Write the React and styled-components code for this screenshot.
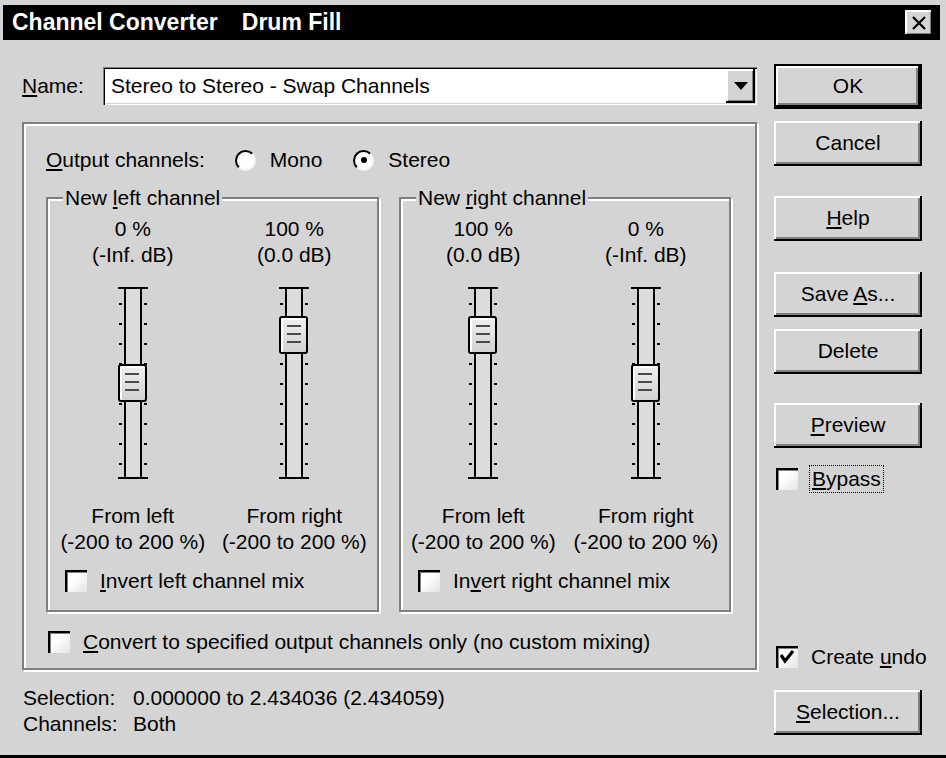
import React from 'react';
import styled, { createGlobalStyle, css } from 'styled-components';

const FACE = '#d4d4d4';
const SHADOW = '#808080';

const GlobalStyle = createGlobalStyle`
  html, body {
    margin: 0;
    padding: 0;
    background: ${FACE};
  }
`;

const Window = styled.div`
  box-sizing: border-box;
  width: 946px;
  height: 758px;
  padding: 5px 6px 0 3px;
  background: ${FACE};
  border-bottom: 3px solid #000;
  display: flex;
  flex-direction: column;
  font-family: "Liberation Sans", Arial, sans-serif;
  font-size: 21px;
  color: #000;
  overflow: hidden;
`;

const TitleBar = styled.div`
  height: 35px;
  flex-shrink: 0;
  background: #000;
  display: flex;
  align-items: center;
  justify-content: space-between;
  padding: 0 7px 0 9px;
`;

const TitleText = styled.div`
  color: #fff;
  font-weight: bold;
  font-size: 23px;
  white-space: nowrap;
`;

const TitlePart = styled.span`
  margin-left: ${(p) => p.$gap || 0}px;
`;

const CloseButton = styled.div`
  width: 28px;
  height: 26px;
  background: ${FACE};
  box-shadow: inset -2px -2px 0 #000, inset 2px 2px 0 #fff, inset -3px -3px 0 ${SHADOW};
  display: flex;
  align-items: center;
  justify-content: center;
`;

const Body = styled.div`
  flex: 1;
  display: flex;
  gap: 17px;
  padding-left: 19px;
`;

const LeftCol = styled.div`
  width: 735px;
  display: flex;
  flex-direction: column;
`;

const RightCol = styled.div`
  width: 148px;
  display: flex;
  flex-direction: column;
  padding-bottom: 20px;
`;

const U = styled.span`
  text-decoration: underline;
  text-underline-offset: 2px;
  text-decoration-thickness: 2px;
`;

const NameRow = styled.div`
  margin-top: 27px;
  height: 38px;
  display: flex;
  align-items: center;
`;

const NameLabel = styled.div`
  width: 81px;
`;

const Combo = styled.div`
  flex: 1;
  height: 38px;
  box-sizing: border-box;
  background: #fff;
  padding: 2px 2px 2px 8px;
  display: flex;
  align-items: center;
  box-shadow: inset 1px 1px 0 ${SHADOW}, inset 2px 2px 0 #000, inset -1px -1px 0 #fff, inset -2px -2px 0 ${FACE};
`;

const ComboText = styled.div`
  flex: 1;
`;

const DropButton = styled.div`
  width: 29px;
  height: 100%;
  background: ${FACE};
  box-shadow: inset -2px -2px 0 #000, inset 2px 2px 0 #fff, inset -3px -3px 0 ${SHADOW};
  display: flex;
  align-items: center;
  justify-content: center;
`;

const Arrow = styled.div`
  width: 0;
  height: 0;
  border-left: 7px solid transparent;
  border-right: 7px solid transparent;
  border-top: 8px solid #000;
`;

const etched = css`
  border: 2px solid ${SHADOW};
  box-shadow: inset 2px 2px 0 #fff, 2px 2px 0 #fff;
`;

const MainGroup = styled.div`
  margin-top: 17px;
  height: 548px;
  box-sizing: border-box;
  ${etched};
  padding: 0 24px 0 22px;
  display: flex;
  flex-direction: column;
`;

const OutputRow = styled.div`
  margin-top: 21px;
  height: 30px;
  display: flex;
  align-items: center;
`;

const RadioItem = styled.div`
  display: flex;
  align-items: center;
  gap: 14px;
  margin-left: ${(p) => p.$ml}px;
`;

const RadioCircle = styled.div`
  width: 21px;
  height: 21px;
  box-sizing: border-box;
  border-radius: 50%;
  background: radial-gradient(circle at 60% 60%, #fff 55%, #ececec 100%);
  border: 2px solid;
  border-color: #000 #f4f4f4 #f4f4f4 #000;
  display: flex;
  align-items: center;
  justify-content: center;
  &::after {
    content: '';
    width: 6px;
    height: 6px;
    border-radius: 50%;
    background: ${(p) => (p.$checked ? '#000' : 'transparent')};
  }
`;

const SubRow = styled.div`
  margin-top: 22px;
  height: 415px;
  display: grid;
  grid-template-columns: 333px 332px;
  gap: 20px;
`;

const SubGroup = styled.div`
  position: relative;
  box-sizing: border-box;
  ${etched};
  display: flex;
  flex-direction: column;
`;

const Legend = styled.div`
  position: absolute;
  top: -14px;
  left: 15px;
  padding: 0 2px;
  line-height: 26px;
  background: ${FACE};
`;

const Columns = styled.div`
  display: grid;
  grid-template-columns: 1fr 1fr;
  padding: 17px 2px 0 ${(p) => p.$pl}px;
`;

const Column = styled.div`
  display: flex;
  flex-direction: column;
  align-items: center;
  line-height: 26px;
  white-space: nowrap;
`;

const SliderWrap = styled.div`
  position: relative;
  width: 30px;
  height: 192px;
  margin: 19px 0 24px;
  display: flex;
  justify-content: center;
`;

const Track = styled.div`
  width: 18px;
  height: 192px;
  box-sizing: border-box;
  border: 2px solid #000;
  background: #dcdcdc;
`;

const Ticks = styled.svg`
  position: absolute;
  left: 0;
  top: 0;
`;

const Thumb = styled.div`
  position: absolute;
  left: 0;
  width: 29px;
  height: 38px;
  box-sizing: border-box;
  border: 2px solid #000;
  border-radius: 3px;
  background: linear-gradient(#efefef, #d2d2d2);
  box-shadow: inset 2px 2px 0 #fff;
`;

const Grip = styled.div`
  width: 14px;
  height: 18px;
  margin: 7px auto 0;
  background: repeating-linear-gradient(to bottom, #4a4a4a 0 2px, transparent 2px 8px);
`;

const CheckRow = styled.div`
  display: flex;
  align-items: center;
  gap: ${(p) => p.$gap || 13}px;
  margin-top: ${(p) => p.$mt || 0}px;
  padding-left: ${(p) => p.$pl || 0}px;
  height: ${(p) => p.$h || 24}px;
  white-space: nowrap;
`;

const Box = styled.div`
  width: 22px;
  height: 22px;
  flex-shrink: 0;
  box-sizing: border-box;
  background: linear-gradient(135deg, #fff 40%, #e4e4e4 100%);
  box-shadow: inset 2px 2px 0 #000, inset 3px 3px 0 ${SHADOW};
  display: flex;
  align-items: center;
  justify-content: center;
`;

const FocusLabel = styled.span`
  outline: 1px dotted #000;
  outline-offset: 1px;
  padding: 0 1px;
`;

const Status = styled.div`
  margin-top: 15px;
  display: grid;
  grid-template-columns: 110px auto;
  line-height: 26px;
  padding-left: 1px;
`;

const Button = styled.div`
  box-sizing: border-box;
  width: 148px;
  height: 45px;
  flex-shrink: 0;
  margin-top: ${(p) => p.$mt || 0}px;
  background: ${FACE};
  text-align: center;
  line-height: 44px;
  white-space: nowrap;
  box-shadow: inset -2px -2px 0 #000, inset 2px 2px 0 #fff, inset -4px -4px 0 ${SHADOW};
  ${(p) =>
    p.$default &&
    css`
      border: 2px solid #000;
      line-height: 40px;
    `}
`;

const Spacer = styled.div`
  flex: 1;
`;

const Slider = ({ value }) => {
  const frac = (200 - value) / 400;
  const ticks = [];
  for (let k = 0; k < 9; k++) {
    const y = 16 + k * 20;
    ticks.push(<rect key={`l${k}`} x="1" y={y} width="3" height="2" />);
    ticks.push(<rect key={`r${k}`} x="26" y={y} width="3" height="2" />);
  }
  return (
    <SliderWrap>
      <Track />
      <Ticks width="30" height="192" fill="#000">
        <rect x="0" y="0" width="6" height="2" />
        <rect x="24" y="0" width="6" height="2" />
        <rect x="0" y="190" width="6" height="2" />
        <rect x="24" y="190" width="6" height="2" />
        {ticks}
      </Ticks>
      <Thumb style={{ top: Math.round(frac * 192 - 19) }}>
        <Grip />
      </Thumb>
    </SliderWrap>
  );
};

const SliderColumn = ({ value, db, from }) => (
  <Column>
    <div>{value} %</div>
    <div>({db} dB)</div>
    <Slider value={value} />
    <div>{from}</div>
    <div>(-200 to 200 %)</div>
  </Column>
);

const Check = ({ checked }) => (
  <Box>
    {checked && (
      <svg width="16" height="16" viewBox="0 0 16 16">
        <path d="M2 6 L6 12 L14 2" fill="none" stroke="#000" strokeWidth="3.2" />
      </svg>
    )}
  </Box>
);

const App = () => (
  <Window>
    <GlobalStyle />
    <TitleBar>
      <TitleText>
        <TitlePart>Channel Converter</TitlePart>
        <TitlePart $gap={24}>Drum Fill</TitlePart>
      </TitleText>
      <CloseButton>
        <svg width="16" height="16" viewBox="0 0 16 16">
          <path d="M2 2 L14 14 M14 2 L2 14" stroke="#000" strokeWidth="2.2" />
        </svg>
      </CloseButton>
    </TitleBar>
    <Body>
      <LeftCol>
        <NameRow>
          <NameLabel>
            <U>N</U>ame:
          </NameLabel>
          <Combo>
            <ComboText>Stereo to Stereo - Swap Channels</ComboText>
            <DropButton>
              <Arrow />
            </DropButton>
          </Combo>
        </NameRow>
        <MainGroup>
          <OutputRow>
            <span>
              <U>O</U>utput channels:
            </span>
            <RadioItem $ml={30}>
              <RadioCircle />
              <span>Mono</span>
            </RadioItem>
            <RadioItem $ml={31}>
              <RadioCircle $checked />
              <span>Stereo</span>
            </RadioItem>
          </OutputRow>
          <SubRow>
            <SubGroup>
              <Legend>
                New <U>l</U>eft channel
              </Legend>
              <Columns $pl={4}>
                <SliderColumn value={0} db="-Inf." from="From left" />
                <SliderColumn value={100} db="0.0" from="From right" />
              </Columns>
              <CheckRow $mt={14} $pl={17}>
                <Check />
                <span>
                  <U>I</U>nvert left channel mix
                </span>
              </CheckRow>
            </SubGroup>
            <SubGroup>
              <Legend>
                New <U>r</U>ight channel
              </Legend>
              <Columns $pl={1}>
                <SliderColumn value={100} db="0.0" from="From left" />
                <SliderColumn value={0} db="-Inf." from="From right" />
              </Columns>
              <CheckRow $mt={14} $pl={17}>
                <Check />
                <span>
                  In<U>v</U>ert right channel mix
                </span>
              </CheckRow>
            </SubGroup>
          </SubRow>
          <CheckRow $mt={17} $pl={2} $h={26}>
            <Check />
            <span>
              <U>C</U>onvert to specified output channels only (no custom mixing)
            </span>
          </CheckRow>
        </MainGroup>
        <Status>
          <span>Selection:</span>
          <span>0.000000 to 2.434036 (2.434059)</span>
          <span>Channels:</span>
          <span>Both</span>
        </Status>
      </LeftCol>
      <RightCol>
        <Button $default $mt={24}>OK</Button>
        <Button $mt={12}>Cancel</Button>
        <Button $mt={30}>
          <U>H</U>elp
        </Button>
        <Button $mt={31}>
          Save <U>A</U>s...
        </Button>
        <Button $mt={12}>Delete</Button>
        <Button $mt={29}>
          <U>P</U>review
        </Button>
        <CheckRow $mt={18} $pl={2} $h={26}>
          <Check />
          <FocusLabel>
            <U>B</U>ypass
          </FocusLabel>
        </CheckRow>
        <Spacer />
        <CheckRow $pl={2} $h={26}>
          <Check checked />
          <span>
            Create <U>u</U>ndo
          </span>
        </CheckRow>
        <Button $mt={20}>
          <U>S</U>election...
        </Button>
      </RightCol>
    </Body>
  </Window>
);

export default App;
